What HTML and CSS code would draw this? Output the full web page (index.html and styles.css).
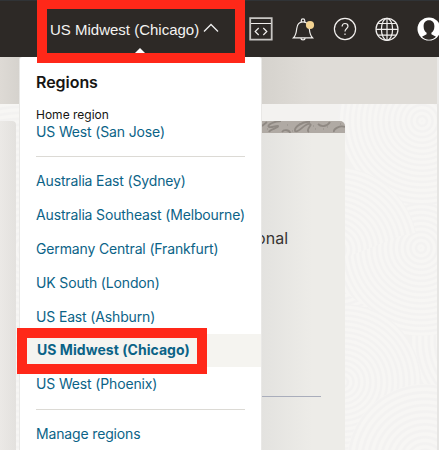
FILE: index.html
```
<!DOCTYPE html>
<html lang="en">
<head>
<meta charset="utf-8">
<title>Regions</title>
<link rel="stylesheet" href="styles.css">
</head>
<body>
<div class="console">
  <header class="topbar">
    <button class="region-button">US Midwest (Chicago)
      <svg class="chevron" width="16" height="10" viewBox="0 0 16 10"><path d="M1 8.500 8 1.500l7 7"/></svg>
    </button>
    <nav class="tools">
      <svg width="24" height="24" viewBox="0 0 24 24"><path class="soft" d="M1.200 1.200h21.500v21.500H1.200z"/><path d="M2 6.500h20M9.700 11l-3.500 3.500 3.500 3.500M14.300 11l3.500 3.500-3.500 3.500"/></svg>
      <svg width="24" height="24" viewBox="0 0 24 24"><path d="M2.500 20.800h19c-2.300-2.200-2.800-5-3.200-9-.4-4.500-2.500-7-6.300-7s-5.900 2.500-6.300 7c-.4 4-.9 6.800-3.200 9zM10.300 4.700v-1.200a1.700 1.700 0 0 1 3.400 0v1.200M9.800 21c.2 2.600 4.200 2.600 4.400 0"/><circle class="dot" cx="19" cy="8" r="4.100"/></svg>
      <svg width="24" height="24" viewBox="0 0 24 24"><circle cx="12" cy="12" r="10.600"/><path d="M9.100 9.500c0-1.800 1.200-3 2.900-3s3 1.100 3 2.700c0 2.300-3 2.300-3 5.300M12 16.500v1.600"/></svg>
      <svg width="24" height="24" viewBox="0 0 24 24"><circle cx="12" cy="12.300" r="11"/><ellipse cx="12" cy="12.300" rx="5.600" ry="11"/><path d="M12 1.300v22M1 12.300h22M3.200 6.500h17.600M3.200 18.200h17.600"/></svg>
      <svg width="24" height="24" viewBox="0 0 24 24"><circle class="solid" cx="12" cy="12" r="11.500"/><path class="person" d="M12 3.300c-3.500 0-5.400 2.500-5.400 6 0 3.100 1.200 5.300 3 6.500v1.500l-4.600 2.400c3.800 4 10.200 4 14 0l-4.600-2.400v-1.500c1.800-1.200 3-3.400 3-6.500 0-3.500-1.900-6-5.400-6z"/></svg>
    </nav>
  </header>
  <div class="band"></div>
  <main class="page">
    <svg class="texture" width="437" height="346" viewBox="0 104 437 346">
      <defs>
        <radialGradient id="a" gradientUnits="userSpaceOnUse" cx="422" cy="121" r="5.600" spreadMethod="repeat"><stop offset="0" stop-color="#f3f2f1"/><stop offset=".2" stop-color="#f7f6f4"/><stop offset=".55" stop-color="#f7f6f4"/><stop offset=".75" stop-color="#f3f2f1"/><stop offset="1" stop-color="#f3f2f1"/></radialGradient>
        <radialGradient id="b" href="#a" cx="421" cy="248" r="5.600"/>
        <radialGradient id="c" href="#a" cx="335" cy="250" r="5.600"/>
        <radialGradient id="d" href="#a" cx="343" cy="382" r="5.600"/>
        <radialGradient id="e" href="#a" cx="425" cy="462" r="6.400"/>
        <radialGradient id="f" href="#a" cx="500" cy="340" r="6"/>
        <radialGradient id="g" href="#a" cx="24" cy="250" r="6"/>
      </defs>
      <path fill="url(#g)" d="M0 104h240v346H0z"/>
      <circle fill="url(#f)" cx="500" cy="340" r="90"/>
      <circle fill="url(#b)" cx="421" cy="248" r="88"/>
      <circle fill="url(#a)" cx="422" cy="121" r="84"/>
      <circle fill="url(#c)" cx="335" cy="250" r="83"/>
      <path fill="url(#b)" d="M345 258l55-22 39-8v62l-30 43-64-40z"/>
      <circle fill="url(#d)" cx="343" cy="382" r="78"/>
      <circle fill="url(#e)" cx="425" cy="462" r="78"/>
    </svg>
    <section class="card card-left"></section>
    <section class="card card-main">
      <svg class="banner" width="89" height="12" viewBox="0 0 89 12"><path d="M6 5l5-4M25 0c-6 0-15 4-12 6 3 1 8-2 9-1 1 2-8 3-9 6M26 11c2-3 8-2 8 1M54 1c-7-1-16 5-15 9 3 2 7-4 11-6 3-2 6-1 4 1-2 3-3 5-1 6M62 3c3 3 9 3 12-2M89 6c-5-2-12 2-11 5"/><path class="specks" d="M2 3h1M11 8h1M31 4h1M36 10h1M43 3h1M59 8h1M67 8h1M84 3h1M57 5h1M71 6h1"/></svg>
      <p class="body-copy">additional</p>
      <div class="rule"></div>
    </section>
  </main>
</div>
<aside class="menu">
  <h2>Regions</h2>
  <div class="home-label">Home region</div>
  <a class="home-link">US West (San Jose)</a>
  <hr>
  <ul>
    <li>Australia East (Sydney)</li>
    <li>Australia Southeast (Melbourne)</li>
    <li>Germany Central (Frankfurt)</li>
    <li>UK South (London)</li>
    <li>US East (Ashburn)</li>
    <li class="selected">US Midwest (Chicago)</li>
    <li>US West (Phoenix)</li>
  </ul>
  <hr class="last-rule">
  <a class="manage">Manage regions</a>
</aside>
<div class="pointer"></div>
<div class="mark mark-top"></div>
<div class="mark mark-selected"></div>
</body>
</html>
```
FILE: styles.css
```
* { box-sizing: border-box; }
body { margin: 0; width: 439px; height: 450px; overflow: hidden; position: relative; font-family: Inter, "Liberation Sans", sans-serif; }
.console { height: 450px; display: flex; flex-direction: column; }
.topbar { height: 57px; flex: none; display: flex; background: #2d2926; border-top: 1px solid #303336; padding-left: 50px; overflow: hidden; }
.region-button { width: 199px; flex: none; padding: 0; border: 0; background: none; display: flex; align-items: center; gap: 4px; height: 57px; color: #f4f3f1; font: 15px "Liberation Sans", sans-serif; white-space: nowrap; }
.chevron { fill: none; stroke: #eee; stroke-width: 1.3; margin-top: -4px; }
.tools { display: flex; gap: 18px; padding-top: 16px; }
.tools svg { flex: none; fill: none; stroke: #f1efed; stroke-width: 1.2; }
.tools .soft { stroke: #c8c6c3; stroke-width: 1.8; }
.tools .dot { fill: #f3d391; stroke: none; }
.tools .solid { fill: #fff; stroke: none; }
.tools .person { fill: #2d2926; stroke: none; }
.band { height: 47px; flex: none; background: linear-gradient(90deg, #dedad5 0, #d5d2cd 20px, #d5d2cd 261px, #dfdcd7 310px); border-right: 2px solid #e9e8e6; }
.page { flex: 1; position: relative; display: flex; gap: 16px; padding-top: 17px; background: #f3f2f0; border-right: 2px solid #e6e5e3; }
.texture { position: absolute; left: 0; top: 0; }
.card { position: relative; height: 329px; background: #edebe8; }
.card-left { width: 16px; border-radius: 0 4px 0 0; background: linear-gradient(90deg, #ebe9e6, #e3e1de); }
.card-main { width: 313px; overflow: hidden; border-radius: 0 5px 0 0; background: linear-gradient(90deg, #e3e2df 229px, #edece8 280px); display: flex; flex-direction: column; align-items: flex-end; }
.banner { flex: none; background: #b0aaa4; fill: none; stroke: #8f8983; stroke-width: 1.8; }
.specks { stroke: #928d87; stroke-width: 1; }
.body-copy { margin: 94px 57px 0 0; font-size: 16px; line-height: 22px; color: #373432; }
.rule { margin: 147px 24px 0 0; width: 200px; height: 1px; background: #a9adbb; }
.menu { position: absolute; left: 19px; top: 57px; width: 243px; height: 393px; background: #fff; border: solid #e9e8e6; border-width: 0 1px; border-radius: 3px 3px 0 0; color: #161513; font-size: 14px; letter-spacing: -.15px; white-space: nowrap; }
.menu h2 { margin: 15px 16px 0; font-size: 16px; line-height: 20px; font-weight: 600; letter-spacing: -.05px; }
.home-label { margin: 15px 16px 0; font-size: 12px; line-height: 16px; letter-spacing: 0; }
.menu a { display: block; margin: 0 16px; line-height: 18px; color: #0b6387; }
.menu hr { height: 1px; border: 0; background: #dcdad5; margin: 15px 16px 7px; }
.menu ul { margin: 0; padding: 0; list-style: none; color: #0b6387; }
.menu li { height: 34px; line-height: 34px; padding-left: 16px; }
.menu .selected { background: #f5f4f0; font-weight: 700; height: 33px; line-height: 31px; padding-left: 17px; letter-spacing: .04px; }
.menu .last-rule { margin-top: 8px; }
.menu .manage { margin-top: 15px; }
.pointer { position: absolute; left: 135px; top: 48px; border: solid transparent; border-width: 0 5px 5px; border-bottom-color: #fff; }
.mark { position: absolute; border: 10px solid #ff2819; }
.mark-top { left: 37px; top: -1px; width: 208px; height: 64px; }
.mark-selected { left: 17px; top: 328px; width: 190px; height: 46px; }
```
